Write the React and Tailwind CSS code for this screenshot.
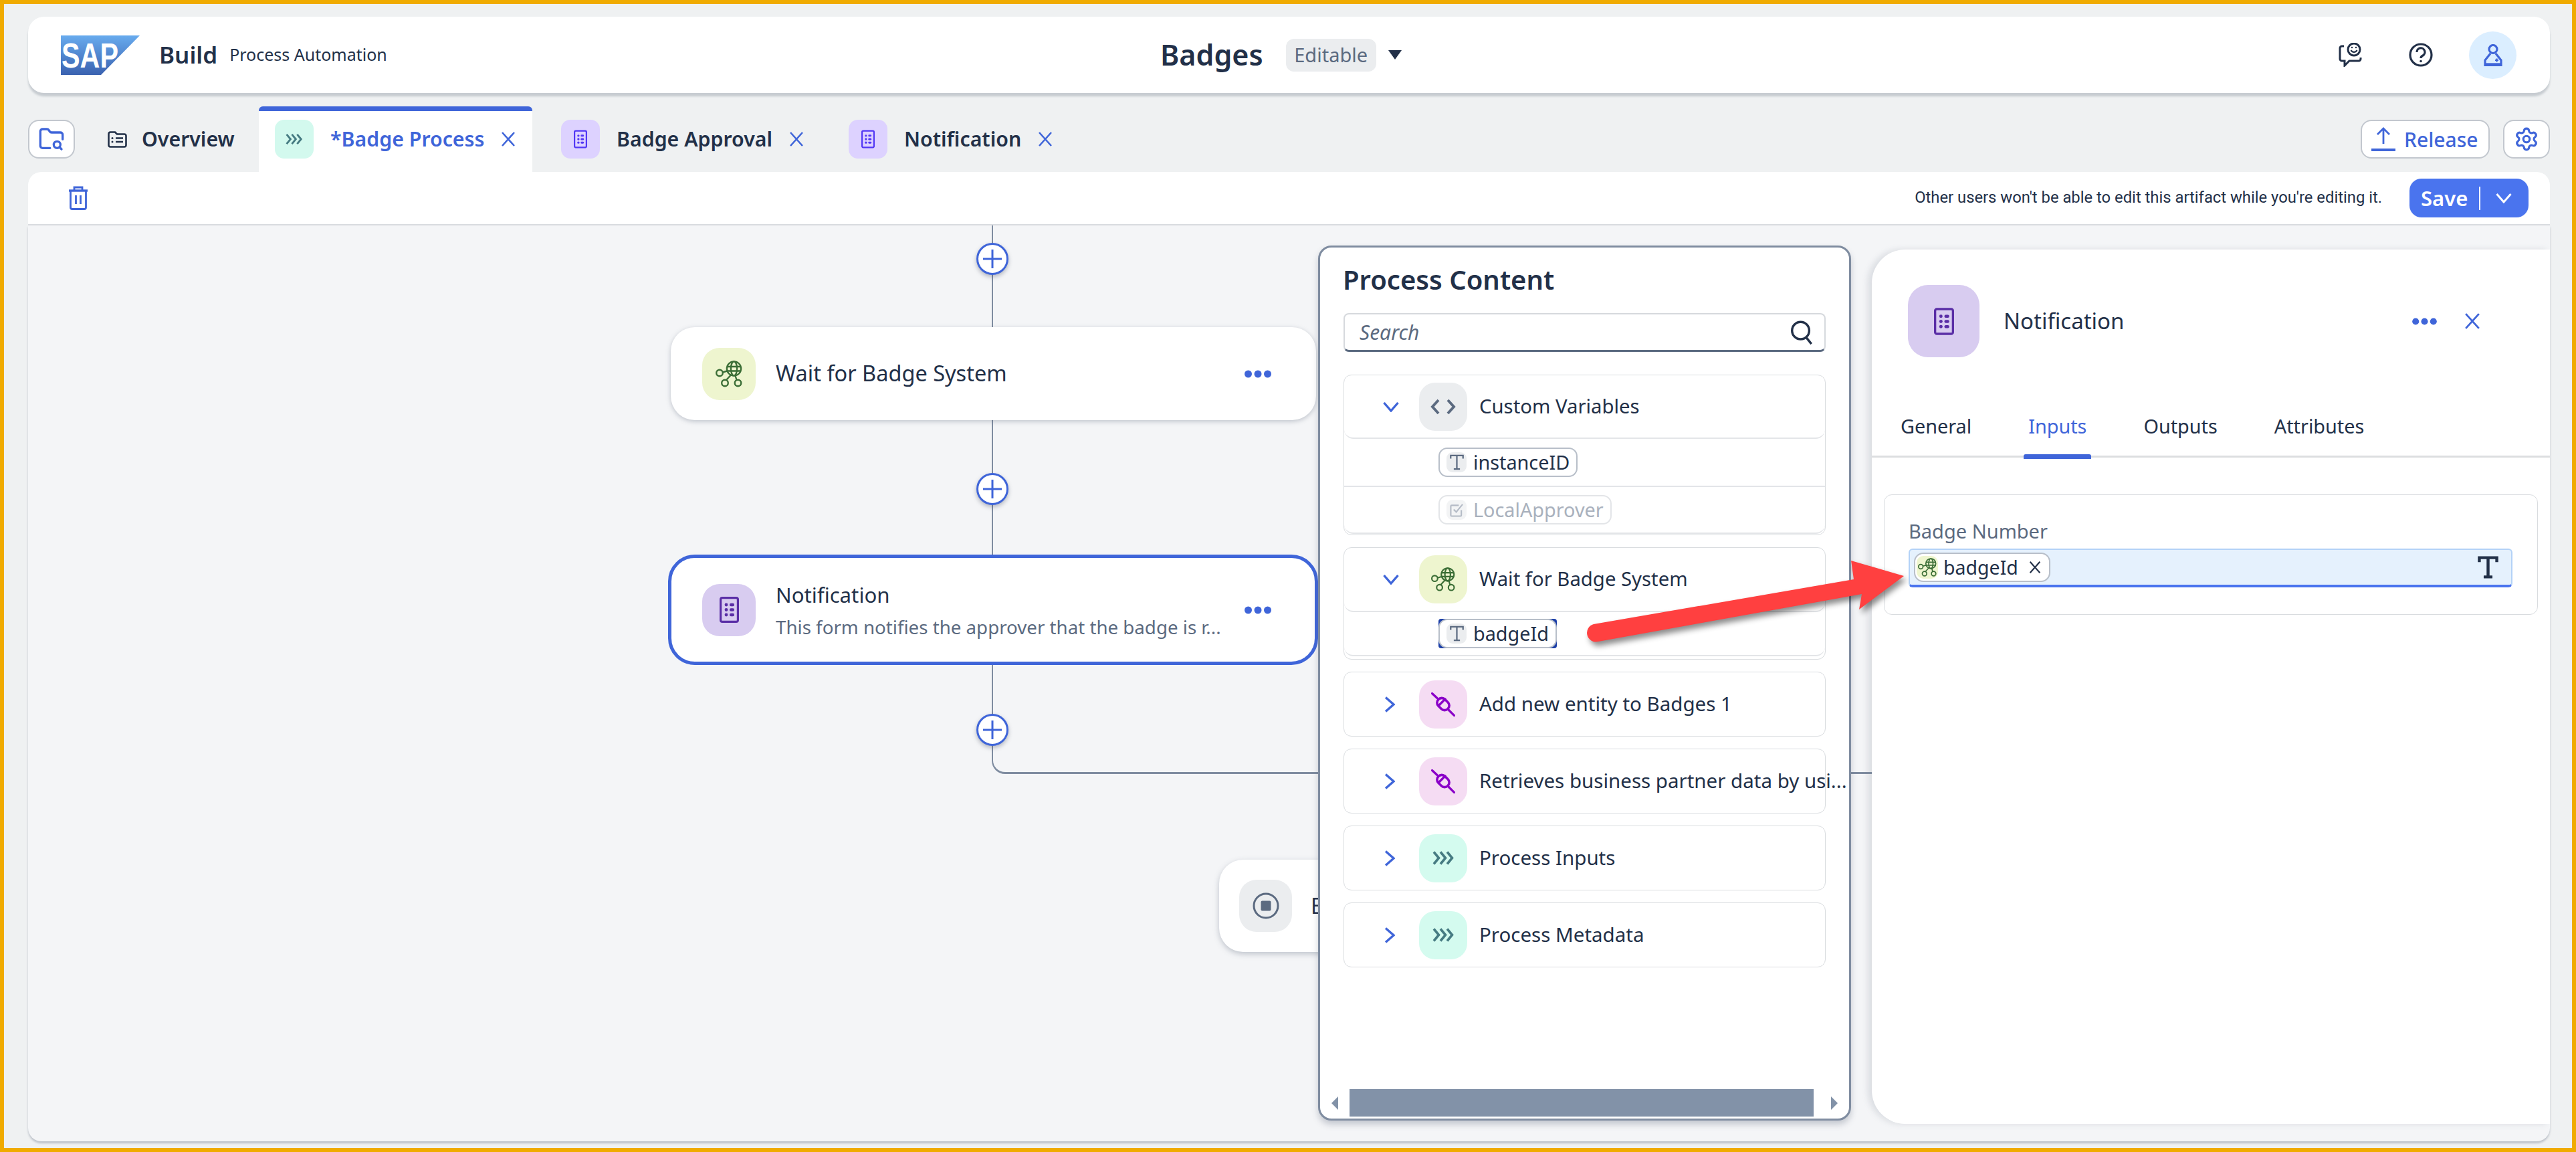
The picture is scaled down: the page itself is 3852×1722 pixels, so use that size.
import React from "react";
import { Settings, FolderSearch } from "lucide-react";

const Close = ({ className = "w-[22px] h-[22px]", color = "#3f65d9" }) => (
  <svg viewBox="0 0 22 22" className={className} fill="none" stroke={color} strokeWidth="2.6"><path d="M2 1 L20 21 M20 1 L2 21" /></svg>
);
const Dots = () => (
  <svg viewBox="0 0 40 12" className="w-[40px] h-[12px]" fill="#3f65d9"><circle cx="5.5" cy="6" r="5.5" /><circle cx="20" cy="6" r="5.5" /><circle cx="34.5" cy="6" r="5.5" /></svg>
);
const Form = ({ className, color }) => (
  <svg viewBox="0 0 29 39" className={className} fill="none" stroke={color} strokeWidth="3.2">
    <rect x="1.6" y="1.6" width="25.8" height="35.8" rx="2.5" />
    <g fill={color} stroke="none">
      <circle cx="10" cy="12" r="2.4" /><rect x="15" y="9.8" width="7" height="4.4" rx="2" />
      <circle cx="10" cy="19.5" r="2.4" /><rect x="15" y="17.3" width="7" height="4.4" rx="2" />
      <circle cx="10" cy="27" r="2.4" /><rect x="15" y="24.8" width="7" height="4.4" rx="2" />
    </g>
  </svg>
);
const Net = ({ className }) => (
  <svg viewBox="0 0 40 40" className={className} fill="none" stroke="#3b6e36" strokeWidth="2.4">
    <circle cx="27.5" cy="12" r="10.6" /><ellipse cx="27.5" cy="12" rx="4.6" ry="10.6" />
    <path d="M17 9 H38 M17 15.5 H38" />
    <circle cx="6" cy="18.5" r="4.8" /><circle cx="14" cy="33.5" r="4.8" /><circle cx="33.5" cy="33.5" r="4.8" />
    <path d="M10.5 17.5 L17.5 15.5 M16 29 L23 21.5 M31.5 29 L29.5 22.5" />
  </svg>
);
const Plug = ({ className }) => (
  <svg viewBox="0 0 36 36" className={className} fill="none" stroke="#8a00c8" strokeWidth="3.6" strokeLinecap="round">
    <path d="M1.5 1.5 L9 8.5 M26 26 L35 35 M11 20 L21 10" strokeWidth="3.2" />
    <rect x="8" y="10.5" width="20" height="14" rx="7" transform="rotate(45 18 17.5)" />
  </svg>
);
const Tri = ({ className }) => (
  <svg viewBox="0 0 33 21" className={className} fill="none" stroke="#467b82" strokeWidth="3.6">
    <path d="M2 1.5 L9.5 10.5 L2 19.5 M12 1.5 L19.5 10.5 L12 19.5 M22 1.5 L29.5 10.5 L22 19.5" />
  </svg>
);
const Code = () => (
  <svg viewBox="0 0 38 26" className="w-[38px] h-[26px]" fill="none" stroke="#5b6a80" strokeWidth="4"><path d="M12 3 L3 13 L12 23 M26 3 L35 13 L26 23" /></svg>
);
const TGlyph = ({ className, color = "#5b6a80", w = "3" }) => (
  <svg viewBox="0 0 24 26" className={className} fill="none" stroke={color} strokeWidth={w}><path d="M2 7 V2 H22 V7 M12 2 V24 M7 24 H17" /></svg>
);
const Chev = ({ open }) => (
  open ? (
    <svg viewBox="0 0 24 16" className="w-[24px] h-[16px]" fill="none" stroke="#3f65d9" strokeWidth="3.4"><path d="M1.5 2 L12 14 L22.5 2" /></svg>
  ) : (
    <svg viewBox="0 0 16 24" className="w-[16px] h-[24px]" fill="none" stroke="#3f65d9" strokeWidth="3.4"><path d="M2 1.5 L14 12 L2 22.5" /></svg>
  )
);

const Tile = ({ className, children }) => (
  <div className={`flex items-center justify-center shrink-0 ${className}`}>{children}</div>
);

const Chip = ({ label, dim, check }) => (
  <div className={`h-[44px] flex items-center rounded-[13px] border-[2px] pl-[10px] pr-[10px] bg-white ${dim ? "border-[#e3e5e8]" : "border-[#b8bfc9]"}`}>
    <div className={`w-[30px] h-[30px] rounded-[9px] flex items-center justify-center ${dim ? "bg-[#f3f4f5]" : "bg-[#ebedef]"}`}>
      {check ? (
        <svg viewBox="0 0 22 22" className="w-[21px] h-[21px]" fill="none" stroke="#b4bbc6" strokeWidth="2.2"><path d="M18 11 V19 a1.5 1.5 0 0 1-1.5 1.5 H3 a1.5 1.5 0 0 1-1.5-1.5 V5 a1.5 1.5 0 0 1 1.5-1.5 H14 M6 10 L10 14 L20 2" /></svg>
      ) : (
        <TGlyph className="w-[23px] h-[24px]" w="2.4" />
      )}
    </div>
    <span className={`ml-[10px] text-[28.8px] leading-[40px] ${dim ? "text-[#a9b1bd]" : "text-[#223048]"}`}>{label}</span>
  </div>
);

const Card = ({ tile, icon, label }) => (
  <div className="h-[97px] shrink-0 rounded-[12px] border-[1.5px] border-[#d9dcdf] flex items-center">
    <div className="w-[112px] flex justify-end pr-[36px] shrink-0"><Chev /></div>
    <Tile className={`w-[72px] h-[72px] rounded-[24px] ${tile}`}>{icon}</Tile>
    <span className="ml-[18px] text-[29.5px] text-[#223048] whitespace-nowrap">{label}</span>
  </div>
);

const Tab = ({ tile, label, active }) => (
  <div className="flex items-center h-[58px] mt-[20px]">
    <Tile className={`w-[58px] h-[58px] rounded-[14px] ${tile}`}>
      {active ? <Tri className="w-[26px] h-[18px]" /> : <Form className="w-[20px] h-[28px]" color="#5237f5" />}
    </Tile>
    <span className={`ml-[25px] text-[30.3px] font-semibold whitespace-nowrap ${active ? "text-[#3f65d9]" : "text-[#223048]"}`}>{label}</span>
    <div className="ml-[25px]"><Close /></div>
  </div>
);

const Plus = ({ className }) => (
  <div className={`absolute w-[48px] h-[48px] rounded-full bg-white border-[3px] border-[#3f65d9] shadow-[0_3px_6px_rgba(60,70,90,0.35)] flex items-center justify-center ${className}`}>
    <svg viewBox="0 0 28 28" className="w-[28px] h-[28px]" stroke="#3f65d9" strokeWidth="3"><path d="M14 0 V28 M0 14 H28" /></svg>
  </div>
);

export default function App() {
  return (
    <div className="relative w-[3852px] h-[1722px] overflow-hidden border-[6px] border-[#f0ab00] bg-[#eff1f2] pl-[36px] pr-[33px] pt-[19px] [font-family:'Noto_Sans',sans-serif]">
      {/* Header */}
      <header className="h-[114px] rounded-[24px] bg-white shadow-[0_5px_3px_rgba(140,150,160,0.4)] flex items-center">
        <div className="w-[1693px] flex items-center pl-[49px] shrink-0">
          <svg viewBox="0 0 118 59" className="w-[118px] h-[59px]">
            <defs>
              <linearGradient id="sapg" x1="0" y1="0" x2="0" y2="1">
                <stop offset="0" stopColor="#68abee" /><stop offset="1" stopColor="#3a62b0" />
              </linearGradient>
            </defs>
            <polygon points="0,0 118,0 60,59 0,59" fill="url(#sapg)" />
            <text x="1" y="48" fontFamily="Liberation Sans" fontWeight="700" fontSize="52" fill="#fff" textLength="85" lengthAdjust="spacingAndGlyphs">SAP</text>
          </svg>
          <span className="ml-[29px] text-[35px] font-semibold text-[#223048]">Build</span>
          <span className="ml-[18px] text-[25px] text-[#223048]">Process Automation</span>
        </div>
        <span className="text-[43px] font-semibold text-[#223048]">Badges</span>
        <div className="ml-[34px] h-[49px] w-[135px] rounded-[12px] bg-[#ebedef] flex items-center justify-center text-[29px] text-[#5b6a80]">Editable</div>
        <svg viewBox="0 0 20 14" className="ml-[18px] w-[20px] h-[14px]" fill="#223048"><path d="M0 0 H20 L10 14 Z" /></svg>
        <div className="ml-auto flex items-center pr-[50px]">
          <svg viewBox="0 0 37 36" className="w-[37px] h-[36px]" fill="none" stroke="#223048" strokeWidth="3">
            <path d="M8 5 H5 a3 3 0 0 0-3 3 V24 a3 3 0 0 0 3 3 H9 V34 L16 27 H30 a3 3 0 0 0 3-3 V22" />
            <circle cx="23" cy="10" r="9" /><path d="M18.5 11 a5 5 0 0 0 9 0" strokeWidth="2.2" />
            <circle cx="20" cy="7" r="1.2" fill="#223048" stroke="none" /><circle cx="26" cy="7" r="1.2" fill="#223048" stroke="none" />
          </svg>
          <svg viewBox="0 0 36 36" className="ml-[68px] w-[36px] h-[36px]" fill="none" stroke="#223048" strokeWidth="3.2">
            <circle cx="18" cy="18" r="16" /><path d="M12 14 a6 6 0 1 1 9 5 q-3 1.5 -3 4" /><circle cx="18" cy="27.5" r="1.8" fill="#223048" stroke="none" />
          </svg>
          <div className="ml-[54px] w-[71px] h-[71px] rounded-full bg-[#dbeeff] flex items-center justify-center">
            <svg viewBox="0 0 28 33" className="w-[28px] h-[33px]" fill="none" stroke="#3f65d9" strokeWidth="3.2">
              <circle cx="14" cy="7.5" r="6" /><path d="M10 14 L2 24 V31.5 H26 V24 L18 14" />
              <path d="M2 30 H26" strokeWidth="3.4" /><path d="M17 24 h5 M19.5 21.5 v5" strokeWidth="2.2" />
            </svg>
          </div>
        </div>
      </header>

      {/* Tabs */}
      <div className="h-[98px] mt-[20px] flex items-start">
        <div className="mt-[20px] w-[70px] h-[58px] rounded-[16px] bg-white border-[2.5px] border-[#c2c7ce] flex items-center justify-center">
          <FolderSearch className="w-[40px] h-[40px] text-[#3f65d9]" strokeWidth={2} />
        </div>
        <div className="mt-[20px] h-[58px] w-[226px] ml-[49px] flex items-center">
          <svg viewBox="0 0 29 25" className="w-[29px] h-[25px]" fill="none" stroke="#223048" strokeWidth="2.6">
            <path d="M1.5 21 a2.5 2.5 0 0 0 2.5 2.5 H25 a2.5 2.5 0 0 0 2.5-2.5 V7 a2.5 2.5 0 0 0-2.5-2.5 H14 L11 1.5 H4 a2.5 2.5 0 0 0-2.5 2.5 Z" />
            <path d="M12 10.5 H23 M12 16 H23" /><circle cx="7" cy="10.5" r="1.5" fill="#223048" stroke="none" /><circle cx="7" cy="16" r="1.5" fill="#223048" stroke="none" />
          </svg>
          <span className="ml-[22px] text-[30.3px] font-semibold text-[#223048]">Overview</span>
        </div>
        <div className="h-[98px] w-[409px] bg-[#ffffff] border-t-[7px] border-[#3f65d9] rounded-t-[6px] pl-[24px]">
          <div className="-mt-[7px]"><Tab tile="bg-[#d3f9ee]" label="*Badge Process" active /></div>
        </div>
        <div className="ml-[43px]"><Tab tile="bg-[#ddd2ff]" label="Badge Approval" /></div>
        <div className="ml-[67px]"><Tab tile="bg-[#ddd2ff]" label="Notification" /></div>
        <div className="ml-auto mt-[20px] flex items-center">
          <div className="w-[193px] h-[58px] rounded-[16px] bg-white border-[2.5px] border-[#c2c7ce] flex items-center pl-[14px]">
            <svg viewBox="0 0 36 36" className="w-[36px] h-[36px]" fill="none" stroke="#3f65d9" strokeWidth="2.8"><path d="M18 25 V3 M9 11 L18 2 L27 11" /><path d="M0 34 H36" strokeWidth="4" /></svg>
            <span className="ml-[13px] text-[30px] font-medium text-[#3f65d9]">Release</span>
          </div>
          <div className="ml-[20px] w-[70px] h-[58px] rounded-[16px] bg-white border-[2.5px] border-[#c2c7ce] flex items-center justify-center">
            <Settings className="w-[38px] h-[38px] text-[#3f65d9]" strokeWidth={2} />
          </div>
        </div>
      </div>

      {/* Toolbar */}
      <div className="h-[80px] bg-white rounded-t-[20px] border-b-[2px] border-[#d8dbdf] flex items-center pl-[59px] pr-[32px]">
        <svg viewBox="0 0 32 36" className="w-[32px] h-[36px]" fill="none" stroke="#3f65d9" strokeWidth="2.8">
          <path d="M2 7 H30" strokeWidth="3.4" /><path d="M10 7 V2 H22 V7" /><path d="M4.5 7 V32 a2.5 2.5 0 0 0 2.5 2.5 H25 a2.5 2.5 0 0 0 2.5-2.5 V7" /><path d="M12.5 14 V27 M19.5 14 V27" />
        </svg>
        <span className="ml-auto text-[23.8px] text-[#223048] [font-family:Roboto,sans-serif]">Other users won't be able to edit this artifact while you're editing it.</span>
        <div className="ml-[41px] w-[178px] h-[58px] rounded-[18px] bg-[#4a74ee] flex items-center pl-[17px]">
          <span className="text-[31px] font-semibold text-white">Save</span>
          <div className="ml-[17px] w-[2px] h-[35px] bg-white" />
          <svg viewBox="0 0 24 16" className="ml-[23px] w-[24px] h-[16px]" fill="none" stroke="#fff" strokeWidth="3"><path d="M1.5 2 L12 14 L22.5 2" /></svg>
        </div>
      </div>

      {/* Canvas */}
      <main className="relative h-[1369px] bg-[#f4f5f7] rounded-b-[20px] shadow-[0_3px_3px_rgba(130,140,155,0.45)] overflow-hidden">
        <div className="absolute left-[1441px] top-0 w-[1320px] h-[820px] border-l-[2.5px] border-b-[3px] border-[#7f8ca0] rounded-bl-[20px]" />
        <Plus className="left-[1418px] top-[26px]" />
        <Plus className="left-[1418px] top-[370px]" />
        <Plus className="left-[1418px] top-[730px]" />

        <div className="absolute left-[961px] top-[152px] w-[965px] h-[139px] rounded-[36px] bg-white shadow-[0_2px_7px_rgba(90,100,120,0.35)] flex items-center pl-[47px] pr-[67px]">
          <Tile className="w-[80px] h-[78px] rounded-[26px] bg-[#eef5cf]"><Net className="w-[40px] h-[40px]" /></Tile>
          <span className="ml-[30px] text-[32.5px] text-[#223048] whitespace-nowrap">Wait for Badge System</span>
          <div className="ml-auto"><Dots /></div>
        </div>

        <div className="absolute left-[957px] top-[492px] w-[972px] h-[165px] rounded-[40px] bg-white border-[5px] border-[#3f65d9] flex items-center pl-[46px] pr-[65px]">
          <Tile className="w-[80px] h-[78px] rounded-[26px] bg-[#d8ccf0]"><Form className="w-[29px] h-[39px]" color="#5a2ea6" /></Tile>
          <div className="ml-[30px] flex flex-col">
            <span className="text-[31.2px] leading-[44px] text-[#223048]">Notification</span>
            <span className="mt-[6px] text-[27.7px] leading-[40px] text-[#5b6a80] whitespace-nowrap">This form notifies the approver that the badge is r...</span>
          </div>
          <div className="ml-auto"><Dots /></div>
        </div>

        <div className="absolute left-[1781px] top-[948px] w-[500px] h-[138px] rounded-[36px] bg-white shadow-[0_3px_8px_rgba(90,100,120,0.35)] flex items-center pl-[30px]">
          <Tile className="w-[79px] h-[78px] rounded-[26px] bg-[#ebedef]">
            <svg viewBox="0 0 40 40" className="w-[40px] h-[40px]" fill="none" stroke="#5b6a80" strokeWidth="3"><circle cx="20" cy="20" r="18" /><rect x="12.5" y="12.5" width="15" height="15" rx="2" fill="#5b6a80" stroke="none" /></svg>
          </Tile>
          <span className="ml-[28px] text-[32px] text-[#223048]">End</span>
        </div>

        {/* Process Content */}
        <aside className="absolute left-[1929px] top-[30px] w-[797px] h-[1308px] rounded-[20px] bg-white border-[3px] border-[#7f8ca0] shadow-[0_6px_10px_rgba(90,100,120,0.3)] flex flex-col overflow-hidden">
          <h2 className="pl-[34px] pt-[23px] text-[40px] leading-[50px] font-semibold text-[#223048]">Process Content</h2>
          <div className="mx-[35px] mt-[25px] h-[58px] shrink-0 rounded-[8px] border-[2px] border-b-[3px] border-[#d6d9dd] border-b-[#5b6a80] flex items-center pl-[22px] pr-[18px]">
            <span className="italic text-[30px] text-[#5b6a80]">Search</span>
            <svg viewBox="0 0 34 40" className="ml-auto w-[33px] h-[38px]" fill="none" stroke="#223048" strokeWidth="3.6"><circle cx="16" cy="17" r="13.5" /><path d="M25 28 L33 38" /></svg>
          </div>
          <div className="mx-[35px] mt-[34px] flex flex-col gap-[18px] whitespace-nowrap">
            <div className="h-[240px] rounded-[12px] border-[1.5px] border-[#d9dcdf]">
              <div className="h-[95px] flex items-center border-b-[2.5px] border-[#e3e5e8] rounded-b-[14px]">
                <div className="w-[112px] flex justify-end pr-[30px]"><Chev open /></div>
                <Tile className="w-[72px] h-[72px] rounded-[24px] bg-[#ebedef]"><Code /></Tile>
                <span className="ml-[18px] text-[29.3px] text-[#223048]">Custom Variables</span>
              </div>
              <div className="h-[72px] flex items-center pl-[141px] border-b-[2.5px] border-[#e3e5e8]"><Chip label="instanceID" /></div>
              <div className="h-[70px] flex items-center pl-[141px] border-b-[2.5px] border-[#e3e5e8] rounded-b-[14px]"><Chip label="LocalApprover" dim check /></div>
            </div>
            <div className="h-[168px] rounded-[12px] border-[1.5px] border-[#d9dcdf]">
              <div className="h-[96px] flex items-center border-b-[2.5px] border-[#e3e5e8] rounded-b-[14px]">
                <div className="w-[112px] flex justify-end pr-[30px]"><Chev open /></div>
                <Tile className="w-[72px] h-[72px] rounded-[24px] bg-[#eef5cf]"><Net className="w-[36px] h-[36px]" /></Tile>
                <span className="ml-[18px] text-[29.3px] text-[#223048]">Wait for Badge System</span>
              </div>
              <div className="h-[66px] flex items-center pl-[141px] border-b-[2.5px] border-[#e3e5e8] rounded-b-[14px]">
                <div className="rounded-[4px] bg-[#1c3fa8]"><Chip label="badgeId" /></div>
              </div>
            </div>
            <Card tile="bg-[#f5dcf3]" icon={<Plug className="w-[36px] h-[36px]" />} label="Add new entity to Badges 1" />
            <Card tile="bg-[#f5dcf3]" icon={<Plug className="w-[36px] h-[36px]" />} label="Retrieves business partner data by usi..." />
            <Card tile="bg-[#d4fbef]" icon={<Tri className="w-[33px] h-[21px]" />} label="Process Inputs" />
            <Card tile="bg-[#d4fbef]" icon={<Tri className="w-[33px] h-[21px]" />} label="Process Metadata" />
          </div>
          <div className="mt-auto h-[44px] flex items-center pl-[17px] pr-[17px] pb-[3px] shrink-0">
            <svg viewBox="0 0 10 20" className="w-[10px] h-[20px]" fill="#8292a8"><path d="M10 0 V20 L0 10 Z" /></svg>
            <div className="ml-[17px] w-[696px] h-[41px] bg-[#8292a8]" />
            <svg viewBox="0 0 10 20" className="ml-[26px] w-[10px] h-[20px]" fill="#8292a8"><path d="M0 0 V20 L10 10 Z" /></svg>
          </div>
        </aside>

        {/* Detail panel */}
        <aside className="absolute left-[2757px] top-[36px] w-[1014px] h-[1307px] rounded-l-[50px] bg-white shadow-[-6px_0_10px_rgba(120,130,145,0.2)]">
          <div className="pt-[53px] pl-[54px] pr-[104px] flex items-center">
            <Tile className="w-[107px] h-[108px] rounded-[30px] bg-[#d8ccf0]"><Form className="w-[30px] h-[41px]" color="#5a2ea6" /></Tile>
            <span className="ml-[36px] text-[33px] text-[#223048]">Notification</span>
            <svg viewBox="0 0 40 12" className="ml-auto w-[37px] h-[11px]" fill="#3f65d9"><circle cx="5.5" cy="6" r="5.5" /><circle cx="20" cy="6" r="5.5" /><circle cx="34.5" cy="6" r="5.5" /></svg>
            <div className="ml-[41px]"><Close className="w-[24px] h-[24px]" /></div>
          </div>
          <div className="mt-[56px] h-[94px] border-b-[3px] border-[#dcdee0] flex pl-[43px] gap-[85px] pt-[26px] text-[28.8px] leading-[42px] text-[#223048]">
            <span>General</span>
            <span className="relative text-[#3f65d9]">Inputs<span className="absolute -left-[7px] -right-[7px] top-[63px] h-[7px] rounded-t-[3px] bg-[#3f65d9]" /></span>
            <span>Outputs</span>
            <span>Attributes</span>
          </div>
          <div className="mx-[18px] mt-[55px] h-[180px] rounded-[12px] border-[1.5px] border-[#d9dcdf] pl-[36px] pr-[37px] pt-[33px]">
            <div className="text-[29px] leading-[42px] text-[#5b6a80]">Badge Number</div>
            <div className="mt-[5px] h-[58px] rounded-[6px] bg-[#e5f1fd] border-[2.5px] border-[#b3d2f7] border-b-[4px] border-b-[#4a74ee] flex items-center pl-[6px] pr-[18px]">
              <div className="h-[44px] w-[204px] rounded-[14px] bg-white border-[2.5px] border-[#b8bfc9] flex items-center pl-[2px]">
                <Tile className="w-[32px] h-[34px] rounded-[10px] bg-[#eef5cf]"><Net className="w-[28px] h-[30px]" /></Tile>
                <span className="ml-[8px] text-[28.5px] text-[#223048]">badgeId</span>
                <Close className="ml-[16px] w-[18px] h-[18px]" color="#223048" />
              </div>
              <TGlyph className="ml-auto w-[33px] h-[34px]" color="#223048" w="3.4" />
            </div>
          </div>
        </aside>
      </main>

      {/* Annotation arrow */}
      <svg viewBox="0 0 3852 1722" className="absolute -left-[6px] -top-[6px] w-[3852px] h-[1722px] pointer-events-none drop-shadow-[4px_6px_4px_rgba(0,0,0,0.45)]">
        <path d="M2383 933 L2772 866 L2768 838 L2847 861 L2780 911 L2784 888 L2390 959 A13 13 0 0 1 2383 933 Z" fill="#ff4040" />
      </svg>
    </div>
  );
}
